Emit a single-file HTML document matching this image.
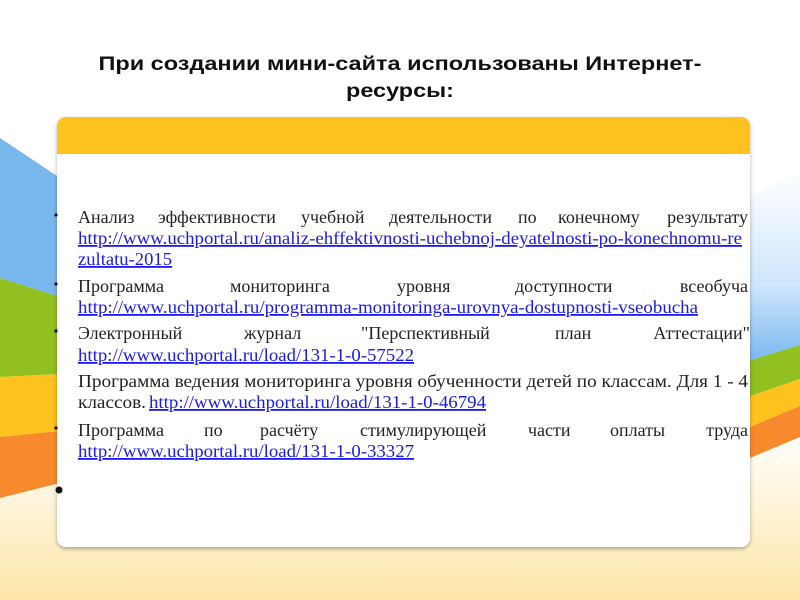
<!DOCTYPE html>
<html><head><meta charset="utf-8"><style>
html,body{margin:0;padding:0;width:800px;height:600px;overflow:hidden;background:#fff}
svg{display:block}
.t{font-family:"Liberation Serif",serif;font-size:18px;fill:#222}
.l{font-family:"Liberation Serif",serif;font-size:18px;fill:#1a1aee;text-decoration:underline}
.h{font-family:"Liberation Sans",sans-serif;font-size:19px;font-weight:bold;fill:#111}
</style></head><body>
<svg width="800" height="600" viewBox="0 0 800 600">
<defs>
<linearGradient id="cream" x1="0" y1="0" x2="0" y2="1">
<stop offset="0" stop-color="#fff"/><stop offset="1" stop-color="#fde6a8"/></linearGradient>
<linearGradient id="rb" x1="0" y1="0" x2="0" y2="1">
<stop offset="0" stop-color="#fff"/><stop offset="0.6" stop-color="#cfe6fb"/><stop offset="1" stop-color="#7ab8f0"/></linearGradient>
<filter id="sh" x="-5%" y="-5%" width="110%" height="110%"><feDropShadow dx="0" dy="2" stdDeviation="2" flood-color="#000" flood-opacity="0.3"/></filter>
</defs>
<rect width="800" height="600" fill="#fff"/>
<rect y="430" width="800" height="170" fill="url(#cream)"/>
<polygon points="0,138 60,178 60,297 0,278" fill="#7ab6ee"/>
<polygon points="0,278 60,297 60,374 0,377" fill="#92c020"/>
<polygon points="0,377 60,374 60,431 0,437" fill="#fdc21e"/>
<polygon points="0,437 60,431 60,483 0,498" fill="#f88a2e"/>
<polygon points="745,200 800,170 800,345 745,362" fill="url(#rb)"/>
<polygon points="745,362 800,345 800,379 745,398" fill="#92c020"/>
<polygon points="745,398 800,379 800,406 745,429" fill="#fdc21e"/>
<polygon points="745,429 800,406 800,437 745,460" fill="#f88a2e"/>
<rect x="57" y="117" width="693" height="430" rx="9" fill="#fff" filter="url(#sh)"/>
<path d="M57,154 V126 A9,9 0 0 1 66,117 H741 A9,9 0 0 1 750,126 V154 Z" fill="#fdc21e"/>
<text class="h" x="400" y="70" text-anchor="middle" textLength="603" lengthAdjust="spacingAndGlyphs">При создании мини-сайта использованы Интернет-</text>
<text class="h" x="400" y="97" text-anchor="middle" textLength="108" lengthAdjust="spacingAndGlyphs">ресурсы:</text>
<circle cx="56" cy="215" r="1.6" fill="#111"/>
<text class="t" y="223"><tspan x="78">Анализ</tspan><tspan x="158">эффективности</tspan><tspan x="301">учебной</tspan><tspan x="389">деятельности</tspan><tspan x="518">по</tspan><tspan x="558">конечному</tspan></text>
<text class="t" y="223" x="748" text-anchor="end">результату</text>
<text class="l" x="78" y="244" textLength="664" lengthAdjust="spacingAndGlyphs">http://www.uchportal.ru/analiz-ehffektivnosti-uchebnoj-deyatelnosti-po-konechnomu-re</text>
<text class="l" x="78" y="265" textLength="94" lengthAdjust="spacingAndGlyphs">zultatu-2015</text>
<circle cx="56" cy="284" r="1.6" fill="#111"/>
<text class="t" y="292"><tspan x="78">Программа</tspan><tspan x="230">мониторинга</tspan><tspan x="397">уровня</tspan><tspan x="515">доступности</tspan></text>
<text class="t" y="292" x="748" text-anchor="end">всеобуча</text>
<text class="l" x="78" y="313" textLength="620" lengthAdjust="spacingAndGlyphs">http://www.uchportal.ru/programma-monitoringa-urovnya-dostupnosti-vseobucha</text>
<circle cx="56" cy="331" r="1.6" fill="#111"/>
<text class="t" y="339"><tspan x="78">Электронный</tspan><tspan x="244">журнал</tspan><tspan x="361">"Перспективный</tspan><tspan x="555">план</tspan></text>
<text class="t" y="339" x="750" text-anchor="end">Аттестации"</text>
<text class="l" x="78" y="361" textLength="336" lengthAdjust="spacingAndGlyphs">http://www.uchportal.ru/load/131-1-0-57522</text>
<text class="t" x="78" y="387" textLength="670" lengthAdjust="spacingAndGlyphs">Программа ведения мониторинга уровня обученности детей по классам. Для 1 - 4</text>
<text class="t" x="78" y="408" textLength="68" lengthAdjust="spacingAndGlyphs">классов.</text>
<text class="l" x="149" y="408" textLength="337" lengthAdjust="spacingAndGlyphs">http://www.uchportal.ru/load/131-1-0-46794</text>
<circle cx="56" cy="428" r="1.6" fill="#111"/>
<text class="t" y="436"><tspan x="78">Программа</tspan><tspan x="204">по</tspan><tspan x="260">расчёту</tspan><tspan x="360">стимулирующей</tspan><tspan x="528">части</tspan><tspan x="610">оплаты</tspan></text>
<text class="t" y="436" x="748" text-anchor="end">труда</text>
<text class="l" x="78" y="457" textLength="336" lengthAdjust="spacingAndGlyphs">http://www.uchportal.ru/load/131-1-0-33327</text>
<circle cx="59" cy="490" r="3.5" fill="#111"/>
</svg>
</body></html>
